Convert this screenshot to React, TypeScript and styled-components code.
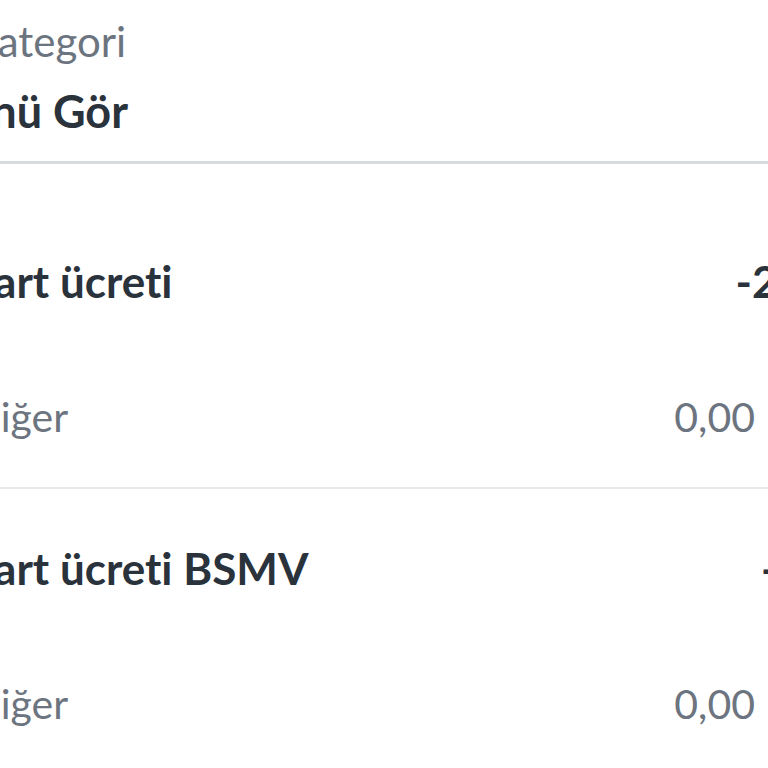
import React from "react";
import styled, { createGlobalStyle } from "styled-components";

const GlobalStyle = createGlobalStyle`
    html, body {
        margin: 0;
        padding: 0;
        background: #ffffff;
        overflow: hidden;
    }
    body {
        font-family: Lato, "Noto Sans", "Liberation Sans", sans-serif;
        font-variant-ligatures: none;
        -webkit-font-smoothing: antialiased;
    }
`;

const Viewport = styled.div`
    width: 768px;
    height: 768px;
    overflow: hidden;
    background: #ffffff;
`;

// the screenshot is a crop of a wider page: the sheet starts left of the window
const Sheet = styled.div`
    width: 1000px;
    margin-left: -36px;
    display: flex;
    flex-direction: column;
`;

const Header = styled.div`
    display: flex;
    flex-direction: column;
    padding: 16px 0 23px;
    border-bottom: 3px solid #d7dade;
`;

const Caption = styled.div`
    font-size: 42px;
    line-height: 50px;
    color: #6c7480;
    padding-left: 6px;
`;

const Title = styled.div<{ $lead?: number }>`
    margin-top: 19px;
    margin-left: ${(p) => -(p.$lead ?? 0)}px;
    font-size: 45px;
    line-height: 53px;
    font-weight: 700;
    color: #2a323c;
    white-space: nowrap;
`;

const List = styled.div`
    display: flex;
    flex-direction: column;
    padding-top: 38px;
`;

const Row = styled.div`
    display: flex;
    flex-direction: column;
    padding: 53px 0 46px;
    border-bottom: 2px solid #e8eaed;
`;

const Line = styled.div<{ $inset: number }>`
    display: flex;
    justify-content: space-between;
    align-items: baseline;
    padding-right: ${(p) => p.$inset}px;
    white-space: nowrap;
`;

const Name = styled.span`
    font-size: 44px;
    line-height: 53px;
    font-weight: 700;
    color: #2a323c;
`;

const Amount = styled.span`
    font-size: 44px;
    line-height: 53px;
    font-weight: 700;
    color: #2a323c;
`;

const SubLine = styled(Line)`
    margin-top: 85px;
`;

const Sub = styled.span`
    font-size: 41px;
    line-height: 48px;
    color: #6c7480;
`;

const Category = styled(Sub)`
    padding-left: 6px;
`;

const fees = [
    { name: "Kart ücreti", amount: "-25,00 TL", category: "Diğer", sub: "0,00" },
    { name: "Kart ücreti BSMV", amount: "-1,25 TL", category: "Diğer", sub: "0,00" },
];

export default function App() {
    return (
        <>
            <GlobalStyle />
            <Viewport>
                <Sheet>
                    <Header>
                        <Caption>Kategori</Caption>
                        <Title $lead={84}>Tümünü Gör</Title>
                    </Header>
                    <List>
                        {fees.map((f) => (
                            <Row key={f.name}>
                                <Line $inset={41}>
                                    <Name>{f.name}</Name>
                                    <Amount>{f.amount}</Amount>
                                </Line>
                                <SubLine $inset={209}>
                                    <Category>{f.category}</Category>
                                    <Sub>{f.sub}</Sub>
                                </SubLine>
                            </Row>
                        ))}
                    </List>
                </Sheet>
            </Viewport>
        </>
    );
}
